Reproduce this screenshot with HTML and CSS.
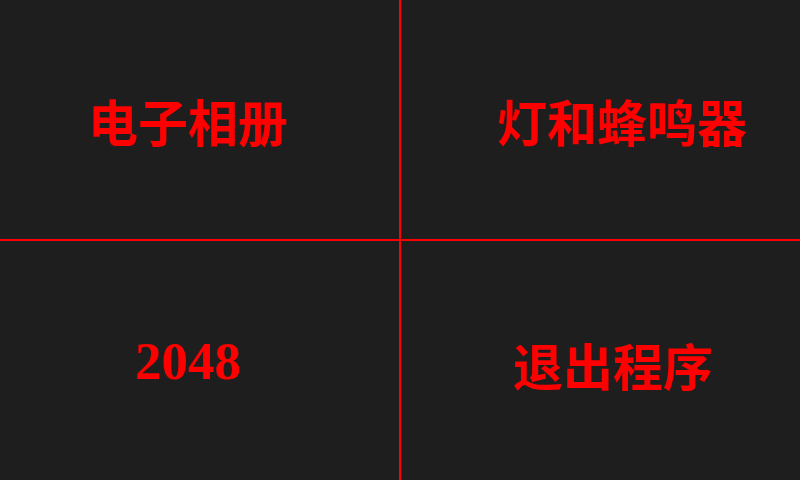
FILE: index.html
```html
<!DOCTYPE html>
<html lang="zh">
<head>
<meta charset="utf-8">
<link rel="stylesheet" href="styles.css">
</head>
<body>
<div class="grid">
  <div class="cell c1"><span class="label cjk">电子相册</span></div>
  <div class="cell c2"><span class="label cjk">灯和蜂鸣器</span></div>
  <div class="cell c3"><span class="label num">2048</span></div>
  <div class="cell c4"><span class="label cjk">退出程序</span></div>
</div>
</body>
</html>
```
FILE: styles.css
```css
html, body {
  margin: 0;
  padding: 0;
  width: 800px;
  height: 480px;
  overflow: hidden;
  background: #1e1e1e;
}
.grid {
  display: grid;
  grid-template-columns: 399px 399px;
  grid-template-rows: 239px 239px;
  gap: 2px;
  background: #ff0000;
  width: 800px;
  height: 480px;
}
.cell {
  background: #1e1e1e;
  display: flex;
  align-items: flex-start;
  justify-content: flex-start;
  box-sizing: border-box;
}
.label {
  color: #ff0000;
  line-height: 1;
  white-space: nowrap;
}
.cjk {
  font-family: "Noto Sans CJK SC", sans-serif;
  font-weight: 700;
  font-size: 50px;
  letter-spacing: 0;
}
.num {
  font-family: "Liberation Serif", serif;
  font-weight: 700;
  font-size: 53px;
}
.c1 { padding: 95px 0 0 88px; }
.c2 { padding: 95px 0 0 96px; }
.c3 { padding: 94px 0 0 135px; }
.c4 { padding: 98px 0 0 112px; }
```
